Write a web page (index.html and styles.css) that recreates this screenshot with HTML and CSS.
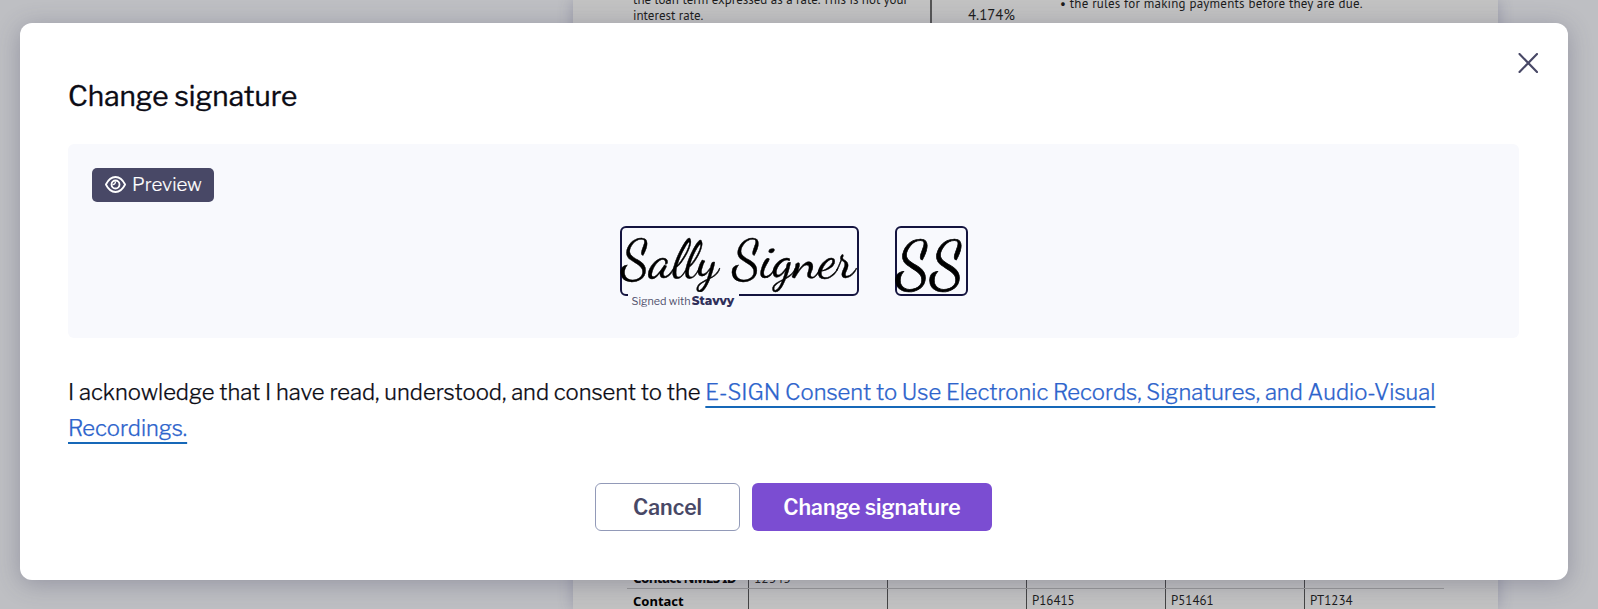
FILE: index.html
```html
<!DOCTYPE html>
<html lang="en">
<head>
    <meta charset="UTF-8">
    <meta name="viewport" content="width=device-width, initial-scale=1.0">
    <title>Change signature</title>
    <link rel="stylesheet" href="styles.css">
</head>
<body>
    <div class="document">
        <div class="doc-top">
            <div class="doc-term">the loan term expressed as a rate. This is not your<br>interest rate.</div>
            <div class="doc-rate">4.174%</div>
            <div class="doc-rules">• the rules for making payments before they are due.</div>
        </div>
        <div class="doc-table">
            <div class="doc-row">
                <div class="label nmls">Contact NMLS ID</div>
                <div>12345</div>
                <div></div>
                <div></div>
                <div></div>
                <div></div>
            </div>
            <div class="doc-row">
                <div class="label">Contact</div>
                <div></div>
                <div></div>
                <div>P16415</div>
                <div>P51461</div>
                <div>PT1234</div>
            </div>
        </div>
    </div>

    <div class="modal" role="dialog">
        <button class="close" aria-label="Close">
            <svg width="20" height="20" viewBox="0 0 20 20"><path d="M1.500 1l17.500 18M19 1L1.500 19" fill="none" stroke="#484866" stroke-width="2.100" stroke-linecap="round"/></svg>
        </button>
        <h1>Change signature</h1>
        <div class="preview">
            <span class="badge">
                <svg width="21" height="17" viewBox="0 0 21 17" fill="none" stroke="#fff" stroke-width="1.8">
                    <path d="M.9 8.500C3.300 3.700 6.600 1 10.500 1s7.200 2.700 9.600 7.500C17.700 13.300 14.400 16 10.500 16S3.300 13.300.9 8.500z" stroke-linejoin="round"/>
                    <circle cx="10.500" cy="8.500" r="4"/>
                    <path d="M10.400 5.500a2.600 2.600 0 0 1-2.900 3" stroke-width="1.300"/>
                </svg>
                <span class="badge-text">Preview</span>
            </span>
            <div class="signatures">
                <div class="sign-box full">
                    <svg width="235" height="65"><text x="-1" y="48.500" textLength="234" lengthAdjust="spacingAndGlyphs">Sally Signer</text></svg>
                    <div class="signed-with">Signed with <b>Stavvy</b></div>
                </div>
                <div class="sign-box initials">
                    <svg width="69" height="65"><text x="-1" y="57.500" textLength="68" lengthAdjust="spacingAndGlyphs">SS</text></svg>
                </div>
            </div>
        </div>
        <p class="consent">I acknowledge that I have read, understood, and consent to the <a href="#">E-SIGN Consent to Use Electronic Records, Signatures, and Audio-Visual<br>Recordings.</a></p>
        <div class="actions">
            <button class="btn cancel">Cancel</button>
            <button class="btn primary">Change signature</button>
        </div>
    </div>
</body>
</html>
```

FILE: styles.css
```css
* {
    box-sizing: border-box;
}
body {
    margin: 0;
    height: 609px;
    overflow: hidden;
    background-color: #bebfc3;
    font-family: "Libre Franklin", "Open Sans", sans-serif;
    color: #0b0b14;
}
.document {
    width: 925px;
    height: 609px;
    margin-left: 573px;
    background-color: #c2c2c2;
    box-shadow: 0 0 14px rgba(70, 70, 110, 0.3);
    font-family: "PT Sans", "Noto Sans", sans-serif;
    font-size: 13px;
    line-height: 16px;
    color: #1c1c1c;
    display: flex;
    flex-direction: column;
    justify-content: space-between;
    white-space: nowrap;
}
.doc-top {
    display: flex;
    height: 40px;
}
.doc-term {
    width: 359px;
    padding-left: 60px;
    margin-top: -8px;
    border-right: 2px solid #555;
}
.doc-rate {
    width: 128px;
    padding: 7px 0 0 36px;
    font-size: 14.8px;
}
.doc-rules {
    margin-top: -4px;
    letter-spacing: 0.2px;
}
.doc-table {
    width: 817px;
    height: 48px;
    margin-left: 54px;
    overflow: hidden;
    display: flex;
    flex-direction: column;
    justify-content: flex-end;
}
.doc-row {
    display: grid;
    flex: none;
    grid-template-columns: 121px repeat(5, 139px);
    height: 23px;
}
.doc-row + .doc-row {
    height: 21px;
    border-top: 1px solid #999;
}
.doc-row div {
    padding: 4px 0 0 5px;
    border-left: 1px solid #444;
}
.doc-row:first-child div {
    padding-top: 5px;
    font-size: 13.5px;
}
.doc-row .label {
    padding-left: 6px;
    font-family: "Noto Sans", sans-serif;
    font-weight: bold;
    border-left: none;
    color: #000;
}
.doc-row .nmls {
    letter-spacing: -0.7px;
}
.modal {
    position: absolute;
    left: 20px;
    top: 23px;
    width: 1548px;
    height: 557px;
    padding: 49px 49px 0 48px;
    background-color: white;
    border-radius: 12px;
    box-shadow: 0 4px 24px rgba(60, 60, 90, 0.32);
}
.close {
    position: absolute;
    top: 30px;
    right: 30px;
    width: 20px;
    height: 20px;
    padding: 0;
    border: none;
    background: none;
}
.close svg {
    display: block;
}
h1 {
    margin: 0;
    height: 72px;
    font-size: 28px;
    font-weight: 400;
    line-height: 48px;
    -webkit-text-stroke: 0.35px;
}
.preview {
    height: 194px;
    padding: 24px;
    background-color: #f8f9fd;
    border-radius: 6px;
}
.badge {
    display: flex;
    align-items: center;
    gap: 6px;
    width: 122px;
    height: 34px;
    padding-left: 13px;
    background-color: #484866;
    border-radius: 5px;
    color: white;
    font-size: 18.7px;
    font-weight: 300;
    line-height: 32px;
    -webkit-text-stroke: 0.15px;
}
.badge svg {
    margin-top: -2px;
}
.signatures {
    display: flex;
    justify-content: center;
    gap: 36px;
    margin-top: 24px;
}
.sign-box {
    position: relative;
    height: 70px;
    border: 2px solid #14143f;
    border-radius: 6px;
}
.sign-box svg {
    display: block;
    overflow: visible;
}
.sign-box text {
    font-family: "Dancing Script", "Liberation Serif", cursive;
    font-size: 54px;
    fill: #000;
    stroke: #000;
    stroke-width: 0.4px;
}
.full {
    width: 239px;
}
.initials {
    width: 73px;
}
.initials text {
    font-size: 65px;
    stroke-width: 0.7px;
}
.signed-with {
    position: absolute;
    left: 6px;
    top: 64px;
    width: 111px;
    height: 18px;
    padding-left: 4px;
    background-color: #f8f9fd;
    font-size: 10.8px;
    line-height: 18px;
    white-space: nowrap;
    color: #50506c;
}
.signed-with b {
    margin-left: -1px;
    font-family: Montserrat, Inter, sans-serif;
    font-size: 12px;
    font-weight: 800;
    color: #30305a;
}
.consent {
    margin: 36px 0 0;
    height: 73px;
    font-size: 22px;
    font-weight: 300;
    line-height: 36px;
    white-space: nowrap;
    -webkit-text-stroke: 0.25px;
}
.consent a {
    color: #2d64cc;
    text-decoration: underline;
    text-decoration-color: #1668b8;
    text-decoration-thickness: 2px;
    text-underline-offset: 6px;
    text-decoration-skip-ink: none;
}
.actions {
    display: flex;
    justify-content: center;
    gap: 12px;
    margin-top: 36px;
}
.btn {
    height: 48px;
    padding: 0;
    border: none;
    border-radius: 6px;
    font-family: inherit;
    font-size: 21.2px;
    font-weight: 580;
}
.cancel {
    width: 145px;
    border: 1px solid #929ab8;
    background-color: white;
    color: #484866;
}
.primary {
    width: 240px;
    background-color: #7b4dd2;
    color: white;
}
```
